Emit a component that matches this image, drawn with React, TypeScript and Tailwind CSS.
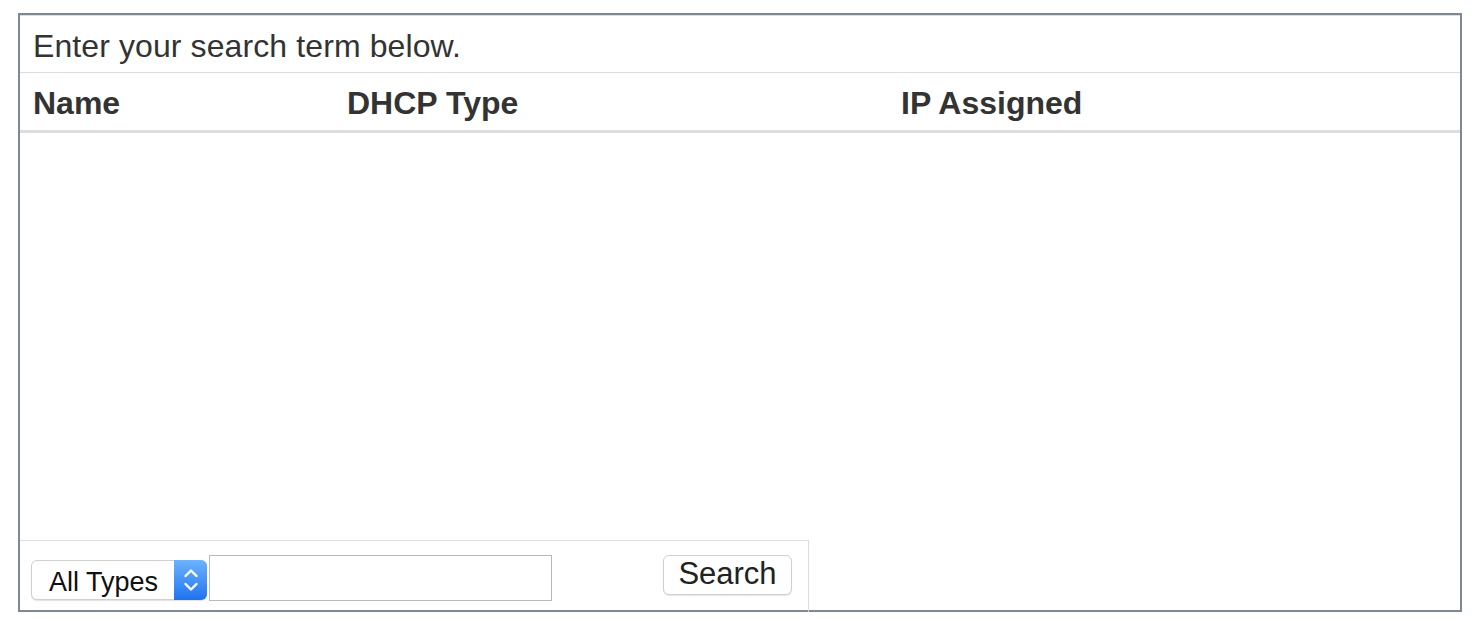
export default function App() {
  return (
    <div className="w-[1478px] h-[624px] bg-white pt-[13px] pl-[18px] font-['Liberation_Sans',Arial,sans-serif] text-[#333]">
      <div className="w-[1444px] h-[599px] border-2 border-[#7d8a93] flex flex-col">
        {/* search hint */}
        <div className="border-t border-b border-[#dddddd] h-[58px] pt-[14px] pl-[13px] text-[32px] leading-none tracking-[0.1px]">
          Enter your search term below.
        </div>

        {/* column headings */}
        <div className="grid grid-cols-[313px_554px_1fr] h-[60px] border-b-[3px] border-[#dddddd] text-[32px] leading-none font-bold">
          <div className="pt-[14px] pl-[13px]">Name</div>
          <div className="pt-[14px] pl-[14px]">DHCP Type</div>
          <div className="pt-[14px] pl-[14px]">IP Assigned</div>
        </div>

        {/* results */}
        <div className="flex-1"></div>

        {/* search bar */}
        <div className="relative w-[789px] h-[70px] border-t border-r border-[#dddddd] bg-white flex items-start pl-[11px] after:absolute after:-right-px after:top-full after:h-[2px] after:w-px after:bg-[#d6d6d6]">
          <div className="mt-[19px] w-[176px] h-[40px] flex rounded-[6px] border border-[#d0d0d0] shadow-[0_1px_1px_rgba(0,0,0,0.12)] bg-white">
            <div className="flex-1 pl-[17px] pt-[8px] text-[27px] leading-none text-[#111]">All Types</div>
            <div className="w-[33px] -my-px -mr-px rounded-r-[6px] bg-gradient-to-b from-[#6db3ff] to-[#1c72f0] flex items-center justify-center">
              <svg width="16" height="30" viewBox="0 0 16 30" fill="none" stroke="white" strokeWidth="2.4" strokeLinecap="round" strokeLinejoin="round">
                <path d="M2.5 11 L8 5.5 L13.5 11" />
                <path d="M2.5 19 L8 24.5 L13.5 19" />
              </svg>
            </div>
          </div>
          <input
            type="text"
            className="mt-[14px] ml-[2px] w-[343px] h-[46px] border border-[#b8b8b8] bg-white outline-none"
          />
          <button className="mt-[14px] ml-[111px] w-[129px] h-[40px] rounded-[6px] border border-[#cfcfcf] bg-white shadow-[0_1px_1px_rgba(0,0,0,0.1)] text-[31px] leading-none text-[#222] pb-[4px]">
            Search
          </button>
        </div>
      </div>
    </div>
  )
}
